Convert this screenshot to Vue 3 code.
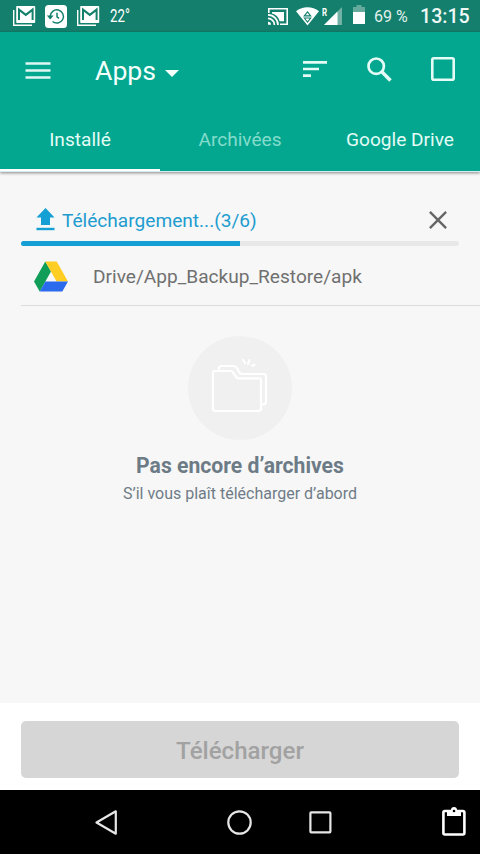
<script setup>
const tabs = [
  { label: 'Installé', active: true },
  { label: 'Archivées', dim: true },
  { label: 'Google Drive' },
]
const progress = 50
</script>

<template>
  <div class="screen">
    <div class="status">
      <svg class="gmail" width="23" height="20" viewBox="0 0 23 20">
        <path d="M.7 4v15.2H19" fill="none" stroke="#fff" stroke-width="1.4" />
        <rect x="3.2" width="19" height="17" rx=".8" fill="#fff" />
        <path d="M6 14V3.6l6.8 5.3 6.8-5.3V14" fill="none" stroke="#137f6c" stroke-width="2" />
      </svg>
      <svg class="history" width="22" height="23" viewBox="0 0 22 23">
        <rect width="22" height="23" rx="3.5" fill="#fff" />
        <path d="M5.2 11.5a6.6 6.6 0 1 1 2.3 5M12 7.7v4.1l2 1.6" fill="none" stroke="#137f6c" stroke-width="1.5" />
        <path d="M1.8 10.6h6.8l-3.4 4z" fill="#137f6c" />
      </svg>
      <svg class="gmail second" width="23" height="20" viewBox="0 0 23 20">
        <path d="M.7 4v15.2H19" fill="none" stroke="#fff" stroke-width="1.4" />
        <rect x="3.2" width="19" height="17" rx=".8" fill="#fff" />
        <path d="M6 14V3.6l6.8 5.3 6.8-5.3V14" fill="none" stroke="#137f6c" stroke-width="2" />
      </svg>
      <span class="temp"><span>22°</span></span>
      <svg class="cast" width="20" height="17" viewBox="0 0 20 17">
        <path d="M.8 5V.8h18.4v15.4H12" fill="none" stroke="#fff" stroke-width="1.6" />
        <path d="M4 4v1.6c4 1 6.7 3.8 7.7 7.7H16V4z" fill="#fff" />
        <path d="M0 6.9A10 10 0 0 1 10 16.9M0 10.4A6.5 6.5 0 0 1 6.5 16.9" fill="none" stroke="#fff" stroke-width="1.7" />
        <path d="M0 13.8a3 3 0 0 1 3 3H0z" fill="#fff" />
      </svg>
      <svg class="wifi" width="23" height="19" viewBox="0 0 23 19">
        <path d="M0 4.2C6.500-1.200 16.500-1.200 23 4.200L11.500 18.500z" fill="#fff" />
        <path d="M8.300 8.900l3.200-4 3.200 4zM8.300 11l3.200 4 3.200-4z" fill="none" stroke="#137f6c" stroke-width="1.1" />
      </svg>
      <span class="roam"><span>R</span></span>
      <svg class="signal" width="18" height="18" viewBox="0 0 18 18">
        <path d="M0 18L18 0v18z" fill="#72b2a6" />
        <path d="M0 18L13.500 4.500V18z" fill="#fff" />
      </svg>
      <svg class="battery" width="12" height="19" viewBox="0 0 12 19">
        <path d="M3.500 0h5v2H12v6H0V2h3.500z" fill="#65aa9d" />
        <path d="M0 7h12v12H0z" fill="#fff" />
      </svg>
      <span class="percent">69 %</span>
      <span class="clock">13:15</span>
    </div>

    <header class="header">
      <div class="toolbar">
        <svg class="menu" width="26" height="17" viewBox="0 0 26 17">
          <path d="M.5 1.500h25M.5 8.500h25M.5 15.500h25" stroke="#def8f3" stroke-width="2.7" />
        </svg>
        <span class="title">Apps</span>
        <svg class="caret" width="14" height="7" viewBox="0 0 14 7"><path d="M0 0h14L7 7z" fill="#f4fffc" /></svg>
        <svg class="sort" width="24" height="16" viewBox="0 0 24 16">
          <path d="M0 1.400h24M0 8h16M0 14.600h8" stroke="#e4fbf6" stroke-width="2.7" />
        </svg>
        <svg class="search" width="25" height="25" viewBox="0 0 25 25">
          <circle cx="9.2" cy="9.2" r="7.7" fill="none" stroke="#e4fbf6" stroke-width="2.7" />
          <path d="M14.800 14.800l8.700 8.700" stroke="#e4fbf6" stroke-width="3.5" />
        </svg>
        <svg class="box" width="24" height="24" viewBox="0 0 24 24">
          <rect x="1.3" y="1.3" width="21.4" height="21.4" rx="1.5" fill="none" stroke="#e4fbf6" stroke-width="2.6" />
        </svg>
      </div>
      <nav class="tabs">
        <div v-for="t in tabs" :key="t.label" class="tab" :class="{ active: t.active, dim: t.dim }">{{ t.label }}</div>
      </nav>
    </header>

    <main class="content">
      <section class="upload">
        <div class="upload-row">
          <svg class="arrow" width="19" height="23" viewBox="0 0 19 23">
            <path d="M9.500 0L18.500 9.500H14V17H5V9.500H.5z" fill="#149fd5" />
            <path d="M.5 21h18" stroke="#149fd5" stroke-width="2.4" />
          </svg>
          <span class="upload-label">Téléchargement...(3/6)</span>
          <svg class="close" width="18" height="18" viewBox="0 0 18 18">
            <path d="M.9 .9l16.200 16.200M17.100 .9L.9 17.100" stroke="#666" stroke-width="2.4" />
          </svg>
        </div>
        <div class="track"><div class="bar" :style="{ width: progress + '%' }"></div></div>
        <div class="path-row">
          <svg class="drive" width="34" height="31" viewBox="0 0 34 31">
            <path d="M11.300 .5L17 10.400 5.700 30.500 0 20.500z" fill="#0f9d58" />
            <path d="M11.300 .5h11.400L34 20.500H22.600z" fill="#ffcd23" />
            <path d="M11.400 20.500H34l-5.700 10H5.700z" fill="#2a6bee" />
          </svg>
          <span class="path">Drive/App_Backup_Restore/apk</span>
        </div>
      </section>

      <section class="empty">
        <svg width="104" height="104" viewBox="0 0 104 104">
          <circle cx="52" cy="52" r="52" fill="#f0f0f0" />
          <g fill="none" stroke="#fff" stroke-width="2.2" stroke-linejoin="round" stroke-linecap="round">
            <path d="M27 35h15.500q2 0 3 2l2 3q1 2.300 3.500 2.300h20q2 0 2 2V72.500q0 2.500-2.500 2.500h-43q-2.500 0-2.500-2.500V37q0-2 2-2z" />
            <path d="M31 34v-1.500q0-2.500 2.500-2.500h12q2.500 0 3.500 2l2 4q1 2 3.500 2h21q2.500 0 2.500 2.500V66q0 2.500-3.500 2.500" />
            <path d="M55 24l2 3M61.500 24l-1.500 4M66.500 28.700l-2.500 1" />
          </g>
        </svg>
        <h2>Pas encore d’archives</h2>
        <p>S’il vous plaît télécharger d’abord</p>
      </section>
    </main>

    <footer class="footer"><button class="action" disabled>Télécharger</button></footer>

    <div class="navbar">
      <svg class="back" width="23" height="26" viewBox="0 0 23 26">
        <path d="M1.500 12.500L20.800 1.300v22.400z" fill="none" stroke="#e6e6e6" stroke-width="2.2" stroke-linejoin="round" />
      </svg>
      <svg class="home" width="26" height="26" viewBox="0 0 26 26">
        <circle cx="12.5" cy="12.5" r="11.2" fill="none" stroke="#e6e6e6" stroke-width="2.2" />
      </svg>
      <svg class="recent" width="23" height="23" viewBox="0 0 23 23">
        <rect x="1.4" y="1.4" width="20" height="20" rx=".8" fill="none" stroke="#e6e6e6" stroke-width="2.2" />
      </svg>
      <svg class="clip" width="24" height="29" viewBox="0 0 24 29">
        <rect x="1.4" y="4" width="21" height="23.5" rx="1.5" fill="none" stroke="#fff" stroke-width="2.6" />
        <path d="M5 3h4a3 3 0 0 1 6 0h4v6H5z" fill="#fff" />
        <circle cx="12" cy="4" r="1.3" fill="#000" />
      </svg>
    </div>
  </div>
</template>

<style>
body { margin: 0; }
</style>

<style scoped>
.screen {
  width: 480px;
  height: 854px;
  display: flex;
  flex-direction: column;
  overflow: hidden;
  background: #f7f7f7;
  font-family: Roboto, "Liberation Sans", sans-serif;
  font-size: 19.1px;
}
svg { display: block; flex: none; }
span { white-space: nowrap; }
.status {
  height: 32px;
  flex: none;
  display: flex;
  align-items: flex-start;
  background: #137f6c;
  color: #fff;
}
.gmail { margin: 6px 0 0 13px; }
.history { margin: 5px 0 0 9px; }
.gmail.second { margin-left: 10px; }
.temp {
  width: 21px;
  margin: 4px 0 0 10px;
  font-size: 18.5px;
  font-weight: 400;
  line-height: 24px;
}
.temp span { display: block; transform: scaleX(.72); transform-origin: left; }
.cast { margin: 8px 0 0 137px; }
.wifi { margin: 7px 0 0 8px; }
.roam { width: 6px; margin: 6px 0 0 3px; font-size: 10.5px; font-weight: 700; line-height: 13px; }
.roam span { display: block; transform: scaleX(.75); transform-origin: left; }
.signal { margin: 7px 0 0 -4px; }
.battery { margin: 5px 0 0 11px; }
.percent { width: 46px; margin: 5px 0 0 9px; font-size: 16px; line-height: 24px; color: #e0f0ed; }
.clock { font-size: 19.6px; font-weight: 500; line-height: 24px; margin-top: 5px; color: #edf8f6; }

.header { height: 139px; flex: none; background: #03a78f; border-bottom: 1px solid #d5edf0; box-shadow: 0 1px 3px rgba(0, 0, 0, .45); z-index: 1; }
.toolbar { height: 76px; display: flex; align-items: center; color: #f2fffc; }
.menu { margin-left: 25px; }
.title { margin-left: 44px; width: 60px; font-size: 26.67px; line-height: 32px; padding-top: 2px; }
.caret { margin: 6px 0 0 10px; }
.sort { margin: 0 0 2px 124px; }
.search { margin: 0 0 2px 40px; }
.box { margin: 0 0 2px 39px; }
.tabs { height: 63px; display: flex; }
.tab { flex: 1; box-sizing: border-box; text-align: center; line-height: 64px; height: 63px; color: #e3fcf6; border-bottom: 2px solid transparent; }
.tab.dim { color: #83dccb; }
.tab.active { border-bottom-color: #fff; }

.content { flex: 1; min-height: 0; }
.upload { margin-left: 21px; border-bottom: 1px solid #dcdcdc; padding-top: 28px; }
.upload-row { height: 41px; display: flex; align-items: center; color: #229ccf; }
.arrow { margin: 0 0 2px 15px; }
.upload-label { flex: 1; margin: 0 0 1px 7px; }
.close { margin: 0 33px 2px 0; }
.track { width: 438px; height: 5px; border-radius: 3px; overflow: hidden; background: #e8e8e8; }
.bar { height: 5px; background: #149fd5; }
.path-row { height: 59px; display: flex; align-items: center; color: #707070; }
.drive { margin: 2px 25px 0 13px; }
.path { margin-top: 2px; }
.empty { display: flex; flex-direction: column; align-items: center; padding-top: 30px; }
.empty h2 { margin: 12px 0 0; font-size: 21.15px; line-height: 28px; font-weight: 700; color: #6d7b86; }
.empty p { margin: 2px 0 0; font-size: 16px; line-height: 24px; color: #6f7c87; }

.footer { height: 87px; flex: none; box-sizing: border-box; padding: 18px 21px 12px; background: #fff; }
.action {
  display: block;
  width: 438px;
  height: 57px;
  padding: 2px 0 0;
  border: 0;
  border-radius: 5px;
  background: #d6d6d6;
  color: #a2a2a2;
  font-family: inherit;
  font-size: 24.1px;
  font-weight: 500;
}
.navbar { height: 64px; flex: none; display: flex; align-items: flex-start; background: #000; }
.back { margin: 20px 0 0 95px; }
.home { margin: 20px 0 0 109px; }
.recent { margin: 21px 0 0 56px; }
.clip { margin: 17px 0 0 110px; }
</style>
